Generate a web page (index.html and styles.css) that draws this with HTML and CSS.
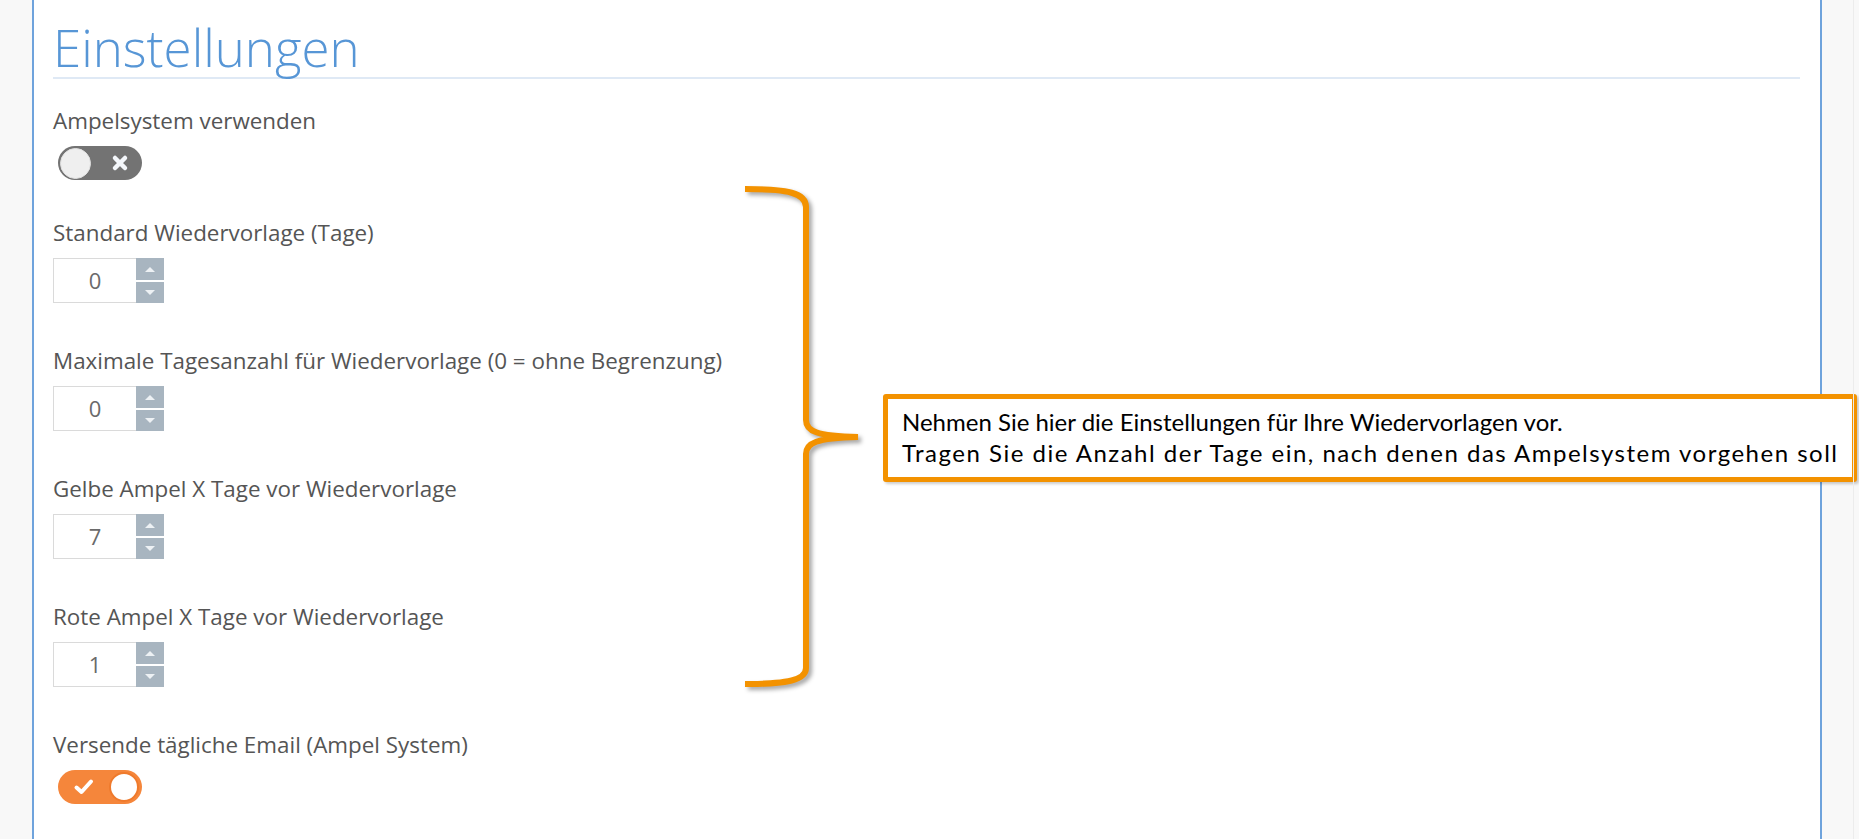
FILE: index.html
```html
<!DOCTYPE html>
<html lang="de">
<head>
<meta charset="utf-8">
<title>Einstellungen</title>
<link rel="stylesheet" href="styles.css">
</head>
<body>
<div class="page">
  <section class="panel">
    <h1 class="title">Einstellungen</h1>

    <div class="field field-first">
      <div class="label">Ampelsystem verwenden</div>
      <div class="toggle toggle-off">
        <span class="knob"></span>
        <svg class="toggle-icon icon-x" width="18" height="18" viewBox="0 0 18 18"><path d="M4 4 L14 14 M14 4 L4 14" /></svg>
      </div>
    </div>

    <div class="field field-after-toggle">
      <div class="label">Standard Wiedervorlage (Tage)</div>
      <div class="spin">
        <div class="spin-value">0</div>
        <div class="spin-buttons"><span class="spin-up"><i class="tri-up"></i></span><span class="spin-down"><i class="tri-down"></i></span></div>
      </div>
    </div>

    <div class="field">
      <div class="label">Maximale Tagesanzahl für Wiedervorlage (0 = ohne Begrenzung)</div>
      <div class="spin">
        <div class="spin-value">0</div>
        <div class="spin-buttons"><span class="spin-up"><i class="tri-up"></i></span><span class="spin-down"><i class="tri-down"></i></span></div>
      </div>
    </div>

    <div class="field">
      <div class="label">Gelbe Ampel X Tage vor Wiedervorlage</div>
      <div class="spin">
        <div class="spin-value">7</div>
        <div class="spin-buttons"><span class="spin-up"><i class="tri-up"></i></span><span class="spin-down"><i class="tri-down"></i></span></div>
      </div>
    </div>

    <div class="field">
      <div class="label">Rote Ampel X Tage vor Wiedervorlage</div>
      <div class="spin">
        <div class="spin-value">1</div>
        <div class="spin-buttons"><span class="spin-up"><i class="tri-up"></i></span><span class="spin-down"><i class="tri-down"></i></span></div>
      </div>
    </div>

    <div class="field">
      <div class="label">Versende tägliche Email (Ampel System)</div>
      <div class="toggle toggle-on">
        <svg class="toggle-icon icon-check" width="22" height="18" viewBox="0 0 22 18"><path d="M3.5 9.5 L8.5 14 L18 3.5" /></svg>
        <span class="knob"></span>
      </div>
    </div>
  </section>

  <svg class="brace" width="1859" height="839" viewBox="0 0 1859 839">
    <path d="M745 189 C788 189 806 193 806 207 L806 420 C806 431 816 436 858 437 C816 438 806 443 806 454 L806 668 C806 680 788 684 745 684" />
  </svg>

  <div class="callout">
    <p>Nehmen Sie hier die Einstellungen für Ihre Wiedervorlagen vor.</p>
    <p class="callout-wide">Tragen Sie die Anzahl der Tage ein, nach denen das Ampelsystem vorgehen soll</p>
  </div>
</div>
</body>
</html>
```

FILE: styles.css
```css
html, body {
  margin: 0;
  padding: 0;
}

body {
  background: #f8f8f8;
  font-family: "Open Sans", "Noto Sans", sans-serif;
  overflow: hidden;
}

.page {
  position: relative;
  width: 1859px;
  height: 839px;
  overflow: hidden;
}

.page::after {
  content: "";
  position: absolute;
  top: 0;
  bottom: 0;
  left: 1853px;
  width: 1px;
  background: #ececec;
}

.panel {
  margin-left: 32px;
  width: 1790px;
  box-sizing: border-box;
  height: 839px;
  background: #ffffff;
  border-left: 2px solid #6fa3dc;
  border-right: 2px solid #6fa3dc;
  padding: 18px 20px 0 19px;
}

.title {
  margin: 0;
  font-family: "Open Sans", sans-serif;
  font-weight: 300;
  font-size: 51px;
  line-height: 59px;
  color: #5796d6;
  border-bottom: 2px solid #dfe9f5;
}

.field {
  margin-top: 43px;
}

.field-first {
  margin-top: 27px;
}

.field-after-toggle {
  margin-top: 38px;
}

.label {
  font-size: 22.4px;
  line-height: 30px;
  color: #555555;
  white-space: nowrap;
}

/* toggles */
.toggle {
  margin-top: 10px;
  margin-left: 5px;
  width: 84px;
  height: 34px;
  border-radius: 17px;
  box-sizing: border-box;
  display: flex;
  align-items: center;
  padding: 0 2px;
}

.toggle-off {
  background: #737373;
  gap: 20px;
}

.toggle-on {
  background: #f5863b;
  justify-content: space-between;
  padding-left: 15px;
  padding-right: 3px;
}

.toggle .knob {
  width: 31px;
  height: 31px;
  border-radius: 50%;
  box-sizing: border-box;
  flex: none;
}

.toggle-off .knob {
  background: #efefef;
  border: 1px solid #e0e0e0;
}

.toggle-on .knob {
  width: 30px;
  height: 30px;
  background: #ffffff;
  border: 2px solid #ef7a2c;
}

.toggle-icon {
  flex: none;
  fill: none;
  stroke: #ffffff;
  stroke-linecap: round;
  stroke-linejoin: round;
}

.icon-x {
  stroke-width: 4.5px;
  stroke: #f4f7fb;
}

.icon-check {
  stroke-width: 4px;
}

/* number spinner */
.spin {
  margin-top: 10px;
  display: flex;
  width: 111px;
  height: 45px;
}

.spin-value {
  width: 83px;
  box-sizing: border-box;
  border: 1px solid #dadada;
  border-right: none;
  display: flex;
  align-items: center;
  justify-content: center;
  font-size: 22px;
  color: #6a6a6a;
  padding-bottom: 1px;
}

.spin-buttons {
  width: 28px;
  display: flex;
  flex-direction: column;
  gap: 2px;
}

.spin-up,
.spin-down {
  flex: 1;
  background: #a8b5c0;
  display: flex;
  align-items: center;
  justify-content: center;
}

.tri-up {
  width: 0;
  height: 0;
  border-left: 5px solid transparent;
  border-right: 5px solid transparent;
  border-bottom: 5px solid #edf1f4;
  margin-top: 2px;
}

.tri-down {
  width: 0;
  height: 0;
  border-left: 5px solid transparent;
  border-right: 5px solid transparent;
  border-top: 5px solid #edf1f4;
  margin-top: 1px;
}

/* annotation overlay */
.brace {
  position: absolute;
  left: 0;
  top: 0;
  pointer-events: none;
  overflow: visible;
}

.brace path {
  fill: none;
  stroke: #f39200;
  stroke-width: 6px;
  stroke-linecap: butt;
  filter: drop-shadow(3px 3px 2px rgba(0, 0, 0, 0.35));
}

.callout {
  position: absolute;
  left: 883px;
  top: 394px;
  width: 974px;
  height: 88px;
  box-sizing: border-box;
  border: 5px solid #f39200;
  border-radius: 3px;
  background: #ffffff;
  padding: 7px 0 0 14px;
  font-family: "Lato", "Open Sans", sans-serif;
  font-size: 24px;
  line-height: 31px;
  color: #000000;
  box-shadow: 2px 2px 3px rgba(0, 0, 0, 0.2);
}

.callout p {
  margin: 0;
  white-space: nowrap;
}

.callout-wide {
  letter-spacing: 1.5px;
}
```
